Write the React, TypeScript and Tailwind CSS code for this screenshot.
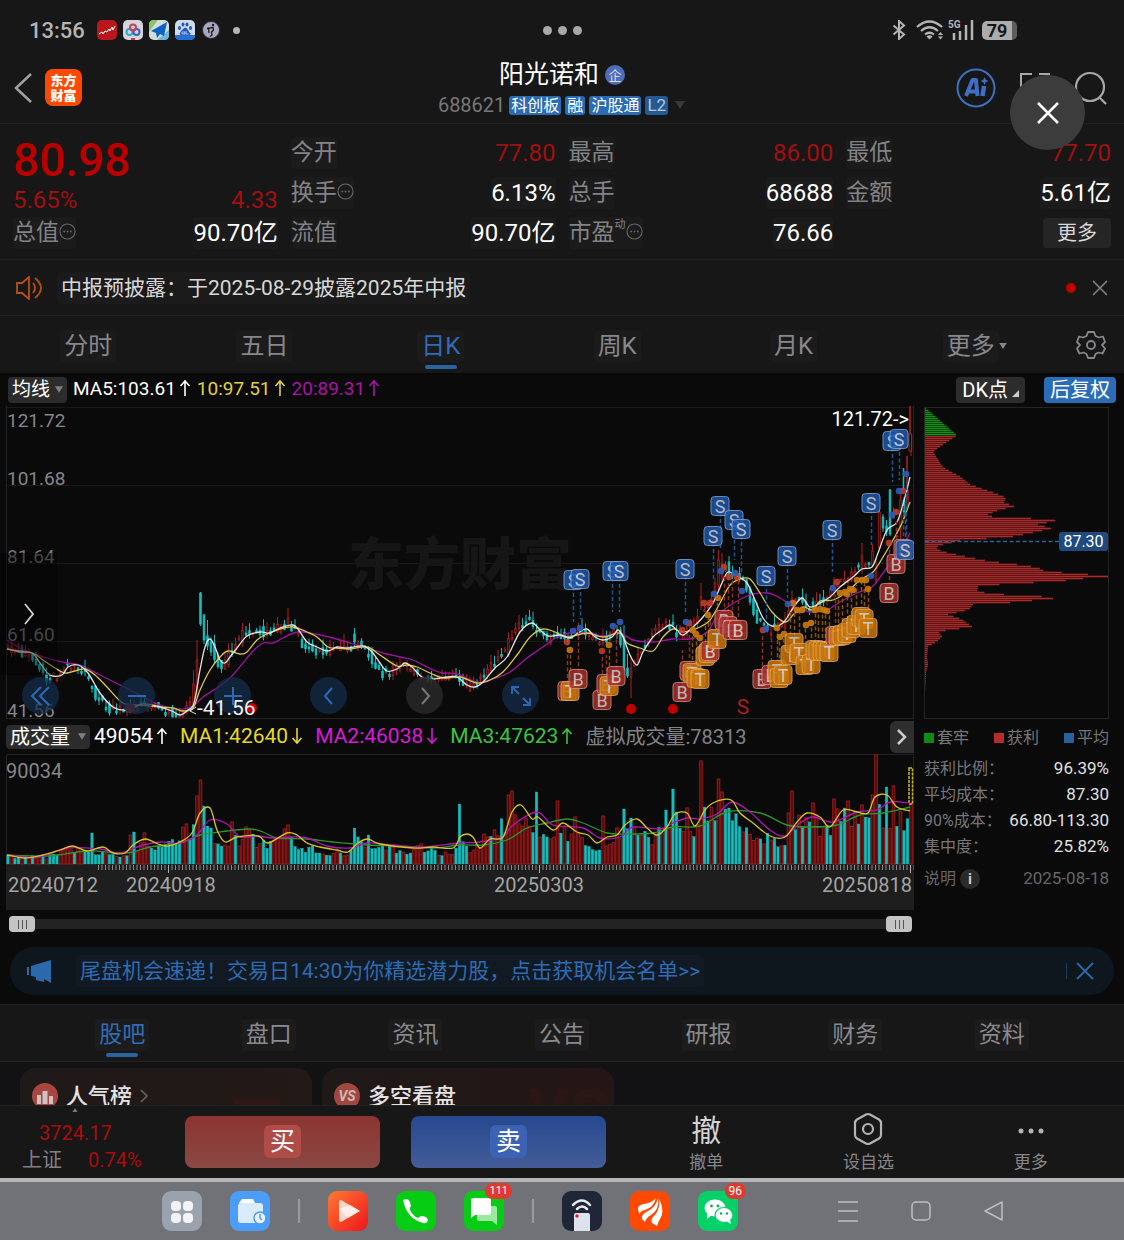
import React from "react";

type Pt = [number, number];

/** Parses "x,y x,y ..." into points. */
const pts = (s: string): Pt[] => s.trim().split(/\s+/).map((p) => p.split(",").map(Number) as Pt);

const at = (line: Pt[], x: number) => {
  if (x <= line[0][0]) return line[0][1];
  for (let i = 1; i < line.length; i++) {
    if (x <= line[i][0]) {
      const [x0, y0] = line[i - 1];
      const [x1, y1] = line[i];
      return y0 + ((y1 - y0) * (x - x0)) / (x1 - x0 || 1);
    }
  }
  return line[line.length - 1][1];
};

const smooth = (p: Pt[]) => {
  let d = `M${p[0][0]} ${p[0][1]}`;
  for (let i = 0; i < p.length - 1; i++) {
    const a = p[i - 1] ?? p[i];
    const b = p[i];
    const c = p[i + 1];
    const e = p[i + 2] ?? c;
    const f = (n: number) => n.toFixed(1);
    d += `C${f(b[0] + (c[0] - a[0]) / 6)} ${f(b[1] + (c[1] - a[1]) / 6)} ${f(c[0] - (e[0] - b[0]) / 6)} ${f(c[1] - (e[1] - b[1]) / 6)} ${c[0]} ${c[1]}`;
  }
  return d;
};

const rand = (i: number, k: number) => {
  const v = Math.sin(i * 12.9898 + k * 78.233) * 43758.5453;
  return v - Math.floor(v);
};

const RED = "#a81e1e";
const CYAN = "#16bcbc";

/* ---------- price chart data (chart units, origin at 6,406) ---------- */

const ma5 = pts(`7,649 20,652 32,653 40,663 50,675 62,675 68,667 78,665 88,673 100,693 113,707 127,710 143,704 160,707 172,711 180,715 188,710 194,703 200,670 205,647 210,639 215,647 220,660 225,663 230,657 237,648 247,636 260,632 270,633 280,628 293,625 300,632 307,642 317,647 328,651 337,647 347,648 363,646 372,652 380,663 387,671 397,669 405,663 412,667 422,677 433,679 447,677 457,677 467,685 475,687 483,682 495,668 507,657 520,632 532,623 540,630 548,636 560,635 570,638 578,633 587,629 595,637 603,640 612,637 618,630 623,637 630,655 637,665 643,652 653,637 662,630 670,625 677,630 683,635 693,627 703,617 713,603 722,583 728,572 737,576 747,583 755,600 763,618 772,626 783,623 793,608 802,598 810,607 820,603 830,597 840,587 853,577 862,569 872,567 878,553 887,530 897,522 905,497 910,477`);
const ma10 = pts(`7,649 32,653 43,660 55,668 65,673 75,671 85,669 95,675 107,687 117,698 125,704 140,705 160,707 173,708 183,711 193,708 200,690 210,670 220,657 228,651 240,654 247,652 257,640 267,634 280,629 293,627 307,632 317,637 328,647 337,648 350,649 367,647 380,655 397,666 407,665 417,667 430,673 443,678 460,677 477,683 490,680 503,672 517,655 530,637 543,629 555,632 567,637 587,633 603,637 620,633 627,643 640,648 653,651 663,637 673,629 683,632 700,627 710,620 720,603 730,585 740,579 750,579 760,593 772,612 785,622 793,615 803,607 813,610 820,601 833,600 847,592 860,580 873,572 883,557 893,540 902,523 910,502`);
const ma20 = pts(`7,640 20,648 33,653 47,658 67,663 80,665 100,675 120,685 140,695 157,704 180,709 193,706 203,697 217,688 230,678 243,663 253,651 263,643 273,643 283,638 297,632 310,633 333,638 353,644 367,648 383,653 400,657 413,660 433,670 443,673 457,674 477,682 493,679 510,672 527,658 543,647 557,637 570,633 590,633 603,636 620,633 633,640 653,642 673,639 690,639 707,632 720,613 747,596 767,593 780,598 793,606 810,612 827,610 840,602 857,593 872,587 883,573 893,560 903,547 910,533`);

const extremes: Record<number, [number, number, number, number, boolean]> = {
  // index: high, body top, body bottom, low, rising
  53: [670, 684, 704, 706, true],
  54: [640, 660, 690, 697, true],
  55: [592, 593, 624, 626, false],
  56: [614, 615, 640, 644, false],
  57: [620, 636, 646, 650, false],
  58: [637, 642, 652, 656, false],
  80: [608, 618, 626, 629, true],
  99: [628, 634, 642, 647, false],
  176: [625, 637, 670, 675, false],
  178: [655, 668, 677, 698, true],
  177: [654, 668, 676, 678, false],
  198: [583, 597, 606, 610, true],
  203: [550, 560, 585, 592, true],
  204: [553, 563, 578, 584, true],
  206: [556, 562, 575, 580, false],
  222: [612, 620, 628, 632, true],
  244: [543, 556, 568, 574, true],
  248: [558, 568, 580, 584, true],
  249: [510, 512, 548, 550, true],
  250: [514, 517, 528, 532, false],
  251: [520, 526, 532, 536, false],
  252: [489, 490, 534, 536, false],
  254: [530, 536, 543, 548, true],
  255: [488, 500, 530, 543, true],
  256: [497, 500, 512, 518, false],
  257: [486, 490, 505, 510, true],
  258: [434, 435, 451, 456, true],
};

const candles = Array.from({ length: 259 }, (_, i) => {
  const x = 8 + i * 3.5;
  const e = extremes[i];
  if (e) return { x, h: e[0], t: e[1], b: e[2], l: e[3], up: e[4] };
  const lead = (k: number) => at(ma5, k + 4) + (at(ma5, k + 4) - at(ma10, k + 4)) * 0.25;
  const open = lead(x - 3.5) + (rand(i, 1) - 0.5) * 10;
  const close = lead(x) + (rand(i, 2) - 0.5) * 10;
  const cap = (v: number) => Math.min(v, 717);
  const t = Math.min(open, close);
  const b = Math.max(open, close, t + 2);
  return { x, t: cap(t), b: cap(b), h: cap(t - rand(i, 3) * 9), l: cap(b + rand(i, 4) * 5), up: close < open };
});

type Mark = ["S" | "B" | "T", number, number, number];
const marks: Mark[] = [
  ["S", 573, 580, 622], ["S", 580, 579, 619], ["S", 612, 571, 612], ["S", 619, 571, 612],
  ["S", 685, 569, 612], ["S", 713, 536, 580], ["S", 720, 506, 548], ["S", 734, 520, 560], ["S", 741, 529, 572],
  ["S", 766, 576, 620], ["S", 787, 556, 598], ["S", 832, 530, 572], ["S", 871, 503, 545],
  ["S", 892, 441, 482], ["S", 899, 439, 480],
  ["B", 567, 691, 645], ["T", 570, 691, 655], ["B", 578, 679, 632],
  ["B", 602, 700, 655], ["B", 606, 684, 655], ["T", 609, 686, 647], ["B", 616, 676, 632],
  ["B", 682, 692, 650], ["B", 689, 671, 635], ["T", 692, 673, 632], ["T", 696, 678, 636], ["T", 700, 679, 640],
  ["T", 705, 656, 622], ["T", 708, 653, 615], ["B", 710, 651, 615], ["T", 717, 639, 602],
  ["B", 724, 620, 575], ["B", 728, 626, 580], ["B", 732, 630, 580], ["B", 738, 630, 580],
  ["B", 762, 679, 632], ["B", 771, 675, 635], ["T", 777, 670, 630], ["T", 779, 678, 636], ["T", 783, 675, 636],
  ["T", 790, 655, 612], ["T", 794, 643, 604], ["T", 799, 653, 612], ["T", 805, 665, 627], ["T", 811, 664, 624],
  ["T", 815, 650, 612], ["T", 818, 651, 612], ["T", 822, 651, 612], ["T", 825, 651, 612], ["T", 829, 652, 612],
  ["B", 835, 636, 595], ["T", 838, 636, 596], ["T", 842, 635, 594], ["T", 847, 633, 592], ["T", 851, 628, 590],
  ["T", 856, 625, 585], ["T", 861, 617, 580], ["T", 864, 619, 582], ["T", 868, 628, 590],
  ["B", 889, 593, 548], ["B", 896, 564, 520], ["B", 903, 549, 505], ["S", 905, 550, 505],
];
const markFill = { S: "#1c56a8", B: "#a82e28", T: "#c87408" };
const markStroke = { S: "#7ea2cf", B: "#d08b86", T: "#dfa55a" };
const dashStroke = { S: "#1f5494", B: "#8c2f20", T: "#8a4f06" };

const blueDots = pts("573,631 580,628 613,626 620,622 686,622 714,594 721,571 735,573 742,591 766,629 788,604 833,588 871,576 892,515 899,491 906,474");
const redDots = pts("567,642 602,651 682,630 689,623 704,603 710,603 724,567 729,577 737,577 763,630 837,582 889,543 896,512 903,491");
const goldDots = pts("570,650 609,645 693,630 696,634 700,638 708,615 718,598 777,628 780,637 784,634 793,603 797,610 802,610 806,625 811,623 815,610 820,609 824,610 827,611 840,593 845,592 847,594 850,589 853,590 857,580 862,580 866,580 868,589");

function Mark({ m }: { m: Mark }) {
  const [k, x, y] = m;
  return (
    <g opacity={0.86}>
      <rect x={x - 9} y={y - 9.5} width="18" height="19" rx="3.5" fill={markFill[k]} stroke={markStroke[k]} />
      <text x={x} y={y + 6.5} textAnchor="middle" fontSize="18" fill="#d8d4d6">{k}</text>
    </g>
  );
}

function PriceChart() {
  return (
    <svg viewBox="6 406 908 313" className="block h-auto w-full" role="img" aria-label="日K线图">
      {[407, 485, 563, 641].map((y) => (
        <path key={y} d={`M6 ${y}.5H914`} stroke="#191919" />
      ))}
      <path d="M6.500 406V718.500H914M913.500 406V719" fill="none" stroke="#232323" />
      <text x="348" y="584" fontSize="56" fontWeight="900" fill="#161616">东方财富</text>
      <g fontSize="19" fill="#85858a">
        <text x="7" y="427">121.72</text>
        <text x="7" y="485">101.68</text>
        <text x="7" y="563" fill="#747474">81.64</text>
        <text x="7" y="641" fill="#747474">61.60</text>
        <text x="7" y="717">41.56</text>
      </g>
      {candles.map((c, i) => (
        <g key={i} stroke={c.up ? RED : CYAN} fill={c.up ? "#0a0a0a" : CYAN}>
          <path d={`M${c.x} ${c.h}V${c.l}`} />
          <rect x={c.x - 0.8} y={c.t} width="1.6" height={Math.max(1, c.b - c.t)} strokeWidth="0.9" />
        </g>
      ))}
      <g stroke={RED} fill="#0a0a0a">
        <path d="M903.500 468V490" stroke={CYAN} strokeWidth="1.600" />
        <path d="M907 456V500M910 406V434" strokeWidth="1.600" />
        <rect x="909" y="434" width="2.500" height="17" />
      </g>
      <g fill="none" strokeWidth="1.300">
        <path d={smooth(ma20)} stroke="#a012a0" />
        <path d={smooth(ma10)} stroke="#d8c94a" />
        <path d={smooth(ma5)} stroke="#e4e4e4" />
      </g>
      {marks.map(([k, x, y, y2], i) => (
        <path key={i} d={`M${x + 0.5} ${y}V${y2}`} stroke={dashStroke[k]} strokeWidth="1.500" strokeDasharray="4 2.500" />
      ))}
      <path d="M906.500 542V482" stroke="#1f5494" strokeWidth="1.500" strokeDasharray="4 2.500" />
      {redDots.map(([x, y], i) => <circle key={i} cx={x} cy={y} r="3.300" fill="#c9402c" opacity="0.85" />)}
      {goldDots.map(([x, y], i) => <circle key={i} cx={x} cy={y} r="3.300" fill="#c97a0a" opacity="0.9" />)}
      {blueDots.map(([x, y], i) => <circle key={i} cx={x} cy={y} r="3.300" fill="#2c5cb8" opacity="0.9" />)}
      {marks.map((m, i) => <Mark key={i} m={m} />)}
      <circle cx="130" cy="708" r="5" fill="#8f1c26" />
      <circle cx="252" cy="708" r="5" fill="#c80000" />
      <circle cx="631" cy="709" r="5" fill="#c00000" />
      <circle cx="673" cy="709" r="5" fill="#c00000" />
      <text x="743" y="714" fontSize="21" textAnchor="middle" fill="#a81e1e">S</text>
      <path d="M196 707L190 711L196 714" fill="none" stroke="#ddd" />
      <text x="909" y="426" fontSize="20" textAnchor="end" fill="#fff">121.72-&gt;</text>
    </svg>
  );
}

/* ---------- volume chart data ---------- */

const volBase = pts(`7,856 47,857 67,845 87,853 100,852 117,857 127,855 140,845 160,848 180,840 197,827 213,838 223,848 233,837 267,843 290,840 300,847 317,848 333,853 347,855 360,845 383,845 400,852 420,845 440,853 453,852 460,837 473,853 483,837 503,823 520,815 532,827 547,835 560,827 577,835 587,844 597,848 607,842 620,830 637,823 652,842 660,830 677,823 693,833 707,810 723,803 737,815 747,830 760,840 773,835 783,843 793,820 810,817 827,830 840,820 860,815 877,808 893,820 910,817`);
const volPeaks: [number, number, boolean][] = [
  [91, 833, false], [130, 835, true], [134, 832, false], [144, 833, true], [182, 827, true], [186, 824, true],
  [196, 796, true], [200, 780, true], [203, 806, false], [207, 826, false], [210, 828, false], [231, 822, true],
  [245, 827, true], [249, 830, true], [252, 834, false], [284, 829, true], [287, 825, true], [354, 828, false],
  [358, 837, false], [368, 835, false], [459, 804, false], [508, 795, true], [511, 791, true], [536, 792, false],
  [557, 801, true], [574, 817, true], [603, 816, true], [623, 809, false], [631, 818, false], [665, 810, false],
  [672, 789, false], [676, 812, false], [687, 808, true], [700, 761, true], [704, 807, false], [718, 779, true],
  [722, 792, true], [725, 809, false], [729, 808, false], [791, 791, true], [787, 813, true], [812, 803, true],
  [833, 799, true], [837, 809, true], [844, 808, false], [847, 801, true], [861, 805, true], [872, 795, true],
  [875, 754, true], [886, 787, false], [893, 786, true], [910, 803, true],
];
const volumes = Array.from({ length: 259 }, (_, i) => {
  const x = 8 + i * 3.5;
  const peak = volPeaks.find((p) => Math.abs(p[0] - x) <= 1.75);
  if (peak) return { x, y: peak[1], up: peak[2] };
  const base = at(volBase, x);
  const up = rand(i, 9) < (at(ma5, x + 6) < at(ma5, x - 6) ? 0.66 : 0.4);
  return { x, y: Math.min(860, base + (rand(i, 7) - 0.35) * (864 - base) * 0.5), up };
});
const volMa1 = pts(`7,855 25,858 43,855 60,850 73,846 87,851 103,847 113,853 125,853 133,845 145,839 158,844 168,846 180,842 192,833 200,813 210,808 217,830 225,842 237,837 258,836 268,843 287,833 297,835 307,843 320,847 337,850 348,852 358,843 368,839 380,844 413,848 433,847 453,848 460,837 467,834 473,837 480,848 490,839 503,837 512,812 521,805 532,819 538,817 553,830 563,823 577,832 588,835 597,843 607,837 617,835 625,825 637,819 647,828 657,835 667,827 675,814 687,813 695,826 705,810 715,802 731,800 740,813 753,823 770,836 785,837 797,822 807,813 820,817 830,827 843,810 857,812 868,813 875,797 887,795 897,807 910,811`);
const volMa2 = pts(`7,855 40,857 67,848 100,849 120,853 140,846 160,842 180,843 197,835 210,820 227,824 240,837 257,836 273,838 290,837 307,838 327,846 350,848 367,843 393,845 420,847 460,843 480,842 503,837 513,825 537,812 553,825 583,828 600,838 620,837 633,827 660,829 673,823 687,818 700,819 717,814 732,802 750,812 770,830 785,836 800,823 813,817 833,822 857,812 877,810 890,802 910,803`);
const volMa3 = pts(`7,855 50,856 87,851 127,853 150,847 180,843 200,835 227,831 250,829 263,832 277,838 307,839 333,842 367,845 400,846 433,848 460,845 483,845 507,840 527,828 547,823 567,819 583,823 607,833 627,834 653,833 673,827 700,826 727,812 760,813 787,825 810,827 837,825 860,815 883,813 910,807`);

function VolumeChart() {
  return (
    <svg viewBox="6 754 908 120" className="block h-auto w-full bg-[linear-gradient(#0a0a0a_92%,#1e1e1e_92%)]" role="img" aria-label="成交量图">
      <path d="M6.500 864V754.500H913.500V864" fill="none" stroke="#232323" />
      <text x="6" y="778" fontSize="20" fill="#85858a">90034</text>
      {volumes.map((v, i) => (
        <rect
          key={i}
          x={v.x - 1.3}
          y={v.y}
          width="2.600"
          height={864 - v.y}
          fill={v.up ? "#480c0c" : CYAN}
          stroke={v.up ? "#981a1a" : CYAN}
          strokeWidth={v.up ? 1 : 0.3}
        />
      ))}
      <rect x="909" y="768" width="3.500" height="36" fill="none" stroke="#c8b820" strokeWidth="1.500" strokeDasharray="3 1" />
      <g fill="none" strokeWidth="1.300">
        <path d={smooth(volMa3)} stroke="#2c962c" />
        <path d={smooth(volMa2)} stroke="#b414b4" />
        <path d={smooth(volMa1)} stroke="#d6c420" />
      </g>
      <path d="M98 867.500H914" stroke="#8a8a8a" strokeWidth="5" strokeDasharray="1 2.500" />
      <path d="M168.500 865V873M539.500 865V873M910.500 865V873" stroke="#aaa" />
    </svg>
  );
}

/* ---------- cost distribution ---------- */

const chips = pts(`28,925 56,957 63,946 72,933 88,943 97,960 105,970 113,993 118,1006 123,1004 127,1014 131,997 135,988 137,992 139,1031 141,1055 145,1038 149,1051 153,1033 157,1013 161,960 165,943 168,935 172,942 177,965 182,990 185,1017 188,1038 192,1045 194,1078 197,1108 199,1083 202,1057 204,1010 207,978 211,977 214,988 216,1020 218,1063 220,1043 223,1010 225,973 230,969 235,948 240,962 247,972 250,953 252,938 257,942 262,937 267,928 277,927 285,928 293,926 313,925`);

function ChipChart() {
  return (
    <svg viewBox="924 406 185 313" className="block h-auto w-full" role="img" aria-label="筹码分布">
      <rect x="924.500" y="407.500" width="184" height="311" fill="none" stroke="#242424" />
      {Array.from({ length: 143 }, (_, i) => {
        const y = 29 + i * 2;
        const d = `M925 ${y + 379.5}H${at(chips, y).toFixed(1)}`;
        return (
          <g key={i}>
            <path d={d} stroke={y < 56 ? "#0c5c10" : "#701a1a"} strokeWidth="2" />
            <path d={d} stroke={y < 56 ? "#119016" : "#a82a2a"} strokeWidth="1" />
          </g>
        );
      })}
      <path d="M925 541.500H1059" stroke="#2a5f9e" strokeWidth="1.500" strokeDasharray="4 2.500" />
      <rect x="1059" y="532" width="49" height="19" rx="3" fill="#1f4a80" />
      <text x="1083.500" y="547" fontSize="16" textAnchor="middle" fill="#fff">87.30</text>
    </svg>
  );
}

/* ---------- small parts ---------- */

const Tri = ({ className }: { className: string }) => (
  <svg viewBox="0 0 10 8" className={className} aria-hidden="true"><path d="M0 0H10L5 8Z" fill="currentColor" /></svg>
);

const Arrow = ({ down }: { down?: boolean }) => (
  <svg viewBox="0 0 12 18" className={down ? "ml-[3px] inline-block h-[18px] w-3 rotate-180 align-[-2px]" : "ml-[3px] inline-block h-[18px] w-3 align-[-2px]"} fill="none" stroke="currentColor" strokeWidth="1.600" role="img" aria-label={down ? "下降" : "上升"}>
    <path d="M6 17V2M1.500 7L6 2L10.500 7" />
  </svg>
);

const More = () => (
  <svg viewBox="0 0 18 18" className="-mt-1 size-[17px] text-[#66666a]" aria-hidden="true">
    <circle cx="9" cy="9" r="8" fill="none" stroke="currentColor" strokeWidth="1.200" />
    <circle cx="5.500" cy="9" r="1" fill="currentColor" /><circle cx="9" cy="9" r="1" fill="currentColor" /><circle cx="12.500" cy="9" r="1" fill="currentColor" />
  </svg>
);

function Row({ label, value, red, info, sup }: { label: string; value: React.ReactNode; red?: boolean; info?: boolean; sup?: string }) {
  return (
    <div className="flex h-10 items-center justify-between">
      <dt className="flex items-center rounded bg-[#1b1b1b] py-0.5 text-[23px] leading-7 text-[#838387]">
        {label}
        {sup && <sup className="-top-2 text-[11px]">{sup}</sup>}
        {info && <More />}
      </dt>
      <dd className={red ? "text-2xl text-[#a01010]" : "rounded bg-[#1b1b1b] text-2xl text-white"}>{value}</dd>
    </div>
  );
}

function StatusBar() {
  return (
    <div className="relative flex h-15 items-center justify-between px-[29px] text-[#b4b4b4]">
      <div className="flex items-center gap-1.5">
        <span className="mr-1.5 text-[22px] font-medium">13:56</span>
        <svg viewBox="0 0 20 20" className="size-5" aria-hidden="true">
          <rect width="20" height="20" rx="5" fill="#b9171c" />
          <path d="M2 14L5 12L6 14L8 11L10 12L12 9L13 11L15 7L16 10L18 6" fill="none" stroke="#fff" />
        </svg>
        <svg viewBox="0 0 20 20" className="size-5" aria-hidden="true">
          <rect width="20" height="20" rx="5" fill="#d4d6da" />
          <g fill="none" strokeWidth="2"><circle cx="6.500" cy="12" r="3" stroke="#2fa9cf" /><circle cx="13.500" cy="12" r="3" stroke="#3c63c0" /><circle cx="10" cy="7.500" r="3" stroke="#cf3c68" /></g>
          <path d="M8 20h4v-2h-4z" fill="#cf3c50" />
        </svg>
        <svg viewBox="0 0 20 20" className="size-5" aria-hidden="true">
          <rect width="20" height="20" rx="5" fill="#d2dde0" /><path d="M5 0H9L0 12V5Q0 0 5 0Z" fill="#8fc46a" /><path d="M20 10V15Q20 20 15 20H8Z" fill="#6cb5dd" />
          <path d="M18 2L2 11L7 13L8 18L11 14L15 16Z" fill="#0f62c4" />
        </svg>
        <svg viewBox="0 0 20 20" className="size-5" aria-hidden="true">
          <rect width="20" height="20" rx="5" fill="#d0dbea" /><path d="M0 15H20Q20 20 15 20H5Q0 20 0 15Z" fill="#2370d8" />
          <g fill="#2255c4"><ellipse cx="4.500" cy="8" rx="1.500" ry="2" /><ellipse cx="8" cy="4.500" rx="1.500" ry="2" /><ellipse cx="12" cy="4.500" rx="1.500" ry="2" /><ellipse cx="15.500" cy="8" rx="1.500" ry="2" /><path d="M10 7.500Q12 7.500 13 10T16 14Q14 16 10 15Q6 16 4.500 14Q5 12 7 10T10 7.500Z" /></g>
          <path d="M7 12H10V14H7ZM11 11V14H13.500" fill="none" stroke="#d0dbea" strokeWidth=".8" />
        </svg>
        <svg viewBox="0 0 20 20" className="size-5" aria-hidden="true">
          <circle cx="10" cy="10" r="8.500" fill="#a9a7bc" stroke="#2d2b45" />
          <circle cx="12" cy="5" r="1.200" fill="#1a1a1a" />
          <path d="M6 8.500L12 7.500L12.500 10L10.500 12L11 15L9 16.500M7.500 9L8 13" fill="none" stroke="#1a1a1a" strokeWidth="1.300" />
        </svg>
        <span className="ml-1.5 size-[7px] rounded-full bg-[#b4b4b4]" />
      </div>
      <div className="absolute inset-x-0 flex justify-center gap-1.5">
        <span className="size-[9px] rounded-full bg-[#a8a8a8]" /><span className="size-[9px] rounded-full bg-[#a8a8a8]" /><span className="size-[9px] rounded-full bg-[#a8a8a8]" />
      </div>
      <div className="mr-[78px] flex items-center gap-2">
        <svg viewBox="0 0 14 20" className="mr-0.5 h-5 w-3.5" fill="none" stroke="currentColor" strokeWidth="2" aria-hidden="true"><path d="M1.500 5.500L12 14.500L7 19V1L12 5.500L1.500 14.500" /></svg>
        <svg viewBox="0 0 28 20" className="h-5 w-7" fill="none" stroke="currentColor" strokeWidth="2.200" aria-hidden="true">
          <path d="M1 7Q13.500 -4 26 7M5 11Q13.500 3.500 22 11M9 14.500Q13.500 11 18 14.500" /><path d="M10.500 16.500Q13.500 14 16.500 16.500L13.500 19.500Z" fill="currentColor" stroke="none" />
          <path d="M22 15L24.500 12L27 15ZM22 16.500L24.500 19.500L27 16.500Z" fill="currentColor" stroke="none" />
        </svg>
        <svg viewBox="0 0 26 22" className="-ml-1 h-[22px] w-[26px]" aria-hidden="true">
          <text x="0" y="9" fontSize="10" fontWeight="700" fill="currentColor">5G</text>
          <path d="M6 14V21M12 12V21M18 6V21M24 1V21" stroke="currentColor" strokeWidth="2.500" />
        </svg>
        <span className="flex items-center">
          <span className="flex h-[19px] w-[30px] items-center justify-center rounded-l-[5px] bg-[#acacac] text-[18px] font-bold text-[#171717]">79</span>
          <span className="h-[19px] w-[5px] rounded-r-[5px] bg-[#5d5d5d]" />
        </span>
      </div>
    </div>
  );
}

const tag = "rounded-[3px] bg-[#2a6cb4] px-0.5 text-[16px] leading-[19px] text-white";

function Header() {
  return (
    <header className="relative flex h-16 items-center justify-between border-b border-[#222] pr-4 pl-[13px]">
      <div className="-mt-2 flex items-center gap-3">
        <button aria-label="返回" className="text-[#a0a0a0]">
          <svg viewBox="0 0 20 32" className="h-8 w-5" fill="none" stroke="currentColor" strokeWidth="2.500"><path d="M18 2L3 16L18 30" /></svg>
        </button>
        <button className="h-[37px] w-[37px] rounded-lg bg-[#ff4800] text-[13px] leading-[15px] font-black text-white">东方<br />财富</button>
      </div>
      <div className="absolute inset-x-0 top-0 mx-auto flex w-fit flex-col items-center">
        <h1 className="flex items-center gap-1.5 text-[25px] leading-[30px] text-white">
          <span>阳光诺和</span>
          <span className="flex size-5 items-center justify-center rounded-full bg-[#4e6cb8] text-[13px] leading-none text-[#dde]">企</span>
        </h1>
        <div className="mt-1 flex items-center gap-1">
          <span className="text-[20px] leading-[22px] text-[#77777a]">688621</span>
          <span className={tag}>科创板</span><span className={tag}>融</span><span className={tag}>沪股通</span><span className="rounded-[3px] bg-[#235a96] px-0.5 text-[17px] leading-[19px] text-[#b9c7d8]">L2</span>
          <Tri className="ml-0.5 h-2 w-3 text-[#3a3a3a]" />
        </div>
      </div>
      <div className="-mt-2 flex items-center gap-[22px]">
        <button aria-label="Ai" className="text-[#3f6fc4]">
          <svg viewBox="0 0 40 40" className="size-10">
            <circle cx="20" cy="20" r="18.500" fill="none" stroke="currentColor" strokeWidth="2" />
            <path d="M10 28L16.500 12H20L21.500 28M13 23.500H20" fill="none" stroke="currentColor" strokeWidth="4" strokeLinejoin="round" />
            <path d="M28 18L26.500 28" stroke="currentColor" strokeWidth="4.500" /><path d="M28.500 9L29.700 11.800L32.500 13L29.700 14.200L28.500 17L27.300 14.200L24.500 13L27.300 11.800Z" fill="currentColor" />
          </svg>
        </button>
        <button aria-label="截屏" className="text-[#a8a8a8]">
          <svg viewBox="0 0 34 34" className="size-[34px]" fill="none" stroke="currentColor" strokeWidth="2"><path d="M3 16V3H14M21 3H32M3 22V32H14M21 32H32V20" /></svg>
        </button>
        <button aria-label="搜索" className="text-[#a8a8a8]">
          <svg viewBox="0 0 34 34" className="size-[34px]" fill="none" stroke="currentColor" strokeWidth="2.200"><circle cx="16" cy="16" r="14" /><path d="M26 27L32 33" /></svg>
        </button>
      </div>
      <button aria-label="关闭" className="absolute top-[15px] right-[39px] flex size-[75px] items-center justify-center rounded-full bg-[#3c3c3c] text-white">
        <svg viewBox="0 0 24 24" className="size-6" stroke="currentColor" strokeWidth="2.500"><path d="M2 2L22 22M22 2L2 22" /></svg>
      </button>
    </header>
  );
}

const roundBtn = "flex size-[37px] items-center justify-center rounded-full bg-[#132c4a]/75 text-[#2f68b0]";
const zoomIcons = [
  { label: "最左", d: "M12 3L3 12L12 21M20 3L11 12L20 21" },
  { label: "缩小", d: "M3 12H21" },
  { label: "放大", d: "M3 12H21M12 3V21" },
  { label: "左移", d: "M15 4L8 12L15 20" },
];

const costs = [
  ["获利比例：", "96.39%"],
  ["平均成本：", "87.30"],
  ["90%成本：", "66.80-113.30"],
  ["集中度：", "25.82%"],
];

const thumb =
  "pointer-events-none absolute inset-x-0 top-0 h-4 w-full appearance-none bg-transparent [&::-webkit-slider-thumb]:pointer-events-auto [&::-webkit-slider-thumb]:h-4 [&::-webkit-slider-thumb]:w-[26px] [&::-webkit-slider-thumb]:appearance-none [&::-webkit-slider-thumb]:rounded [&::-webkit-slider-thumb]:[background:repeating-linear-gradient(90deg,#555_0,#555_1px,transparent_1px,transparent_4px)_center/9px_9px_no-repeat,#c4c4c4]";

function Charts() {
  return (
    <main className="bg-[#0a0a0a]">
      <div className="flex h-[33px] items-center justify-between pr-2 pl-2 text-[19px]">
        <div className="flex items-center gap-1.5">
          <label className="relative flex items-center rounded bg-[#2c2c2c] text-white">
            <select aria-label="主图指标" className="h-[26px] appearance-none bg-transparent pr-4 pl-1 leading-6"><option>均线</option></select>
            <Tri className="pointer-events-none absolute right-1 h-[7px] w-2 text-[#808080]" />
          </label>
          <span className="text-white">MA5:103.61<Arrow /></span>
          <span className="text-[#e0d040]">10:97.51<Arrow /></span>
          <span className="text-[#a814a8]">20:89.31<Arrow /></span>
        </div>
        <div className="flex items-center gap-[19px] text-xl">
          <button className="flex h-[26px] items-center gap-1 rounded bg-[#2c2c2c] px-1.5 text-white">DK点
            <svg viewBox="0 0 7 7" className="mt-2 size-[7px]" aria-hidden="true"><path d="M7 0V7H0Z" fill="#ccc" /></svg>
          </button>
          <button className="h-[26px] rounded bg-[#2a6cb8] px-1.5 leading-6 text-white">后复权</button>
        </div>
      </div>
      <div className="flex gap-2.5 pr-[15px] pl-1.5">
        <section className="min-w-0 flex-1">
          <div className="relative">
            <PriceChart />
            <button aria-label="展开" className="absolute top-[147px] -left-1.5 flex h-[122px] w-[57px] items-center justify-center bg-black/40 text-[#d0d0d0]">
              <svg viewBox="0 0 10 22" className="h-[22px] w-2.5" fill="none" stroke="currentColor" strokeWidth="1.800"><path d="M1 1L9 11L1 21" /></svg>
            </button>
            <div className="absolute bottom-[5px] left-4 flex gap-[59px]">
              {zoomIcons.map((z) => (
                <button key={z.label} aria-label={z.label} className={roundBtn}>
                  <svg viewBox="0 0 24 24" className="size-6" fill="none" stroke="currentColor" strokeWidth="2"><path d={z.d} /></svg>
                </button>
              ))}
              <button aria-label="右移" className="flex size-[37px] items-center justify-center rounded-full bg-[#262626]/90 text-[#777]">
                <svg viewBox="0 0 24 24" className="size-6" fill="none" stroke="currentColor" strokeWidth="2"><path d="M9 4L16 12L9 20" /></svg>
              </button>
              <button aria-label="全屏" className={roundBtn}>
                <svg viewBox="0 0 24 24" className="size-6" fill="none" stroke="currentColor" strokeWidth="1.800"><path d="M3 10V3H10M3 3L10 10M21 14V21H14M21 21L14 14" /></svg>
              </button>
            </div>
            <span className="absolute bottom-0 left-[191px] text-[21px] leading-[22px] text-[#f2f2f2]">-41.56</span>
          </div>
          <div className="flex h-[35px] items-center text-[21px]">
            <label className="relative flex items-center rounded bg-[#2c2c2c] text-xl text-white">
              <select aria-label="副图指标" className="h-6 appearance-none bg-transparent pr-5 pl-1 leading-6"><option>成交量</option></select>
              <Tri className="pointer-events-none absolute right-1 h-[7px] w-2 text-[#808080]" />
            </label>
            <span className="ml-1 text-white">49054<Arrow /></span>
            <span className="ml-3 text-[#e4d82a]">MA1:42640<Arrow down /></span>
            <span className="ml-3 text-[#d81ad8]">MA2:46038<Arrow down /></span>
            <span className="ml-3 text-[#3cc43c]">MA3:47623<Arrow /></span>
            <span className="ml-3 text-xl text-[#828286]">虚拟成交量:78313</span>
            <button aria-label="下一个指标" className="ml-auto flex h-8 w-6 items-center justify-center rounded-l-md bg-[#2e2e2e] text-[#ccc]">
              <svg viewBox="0 0 10 16" className="h-4 w-2.5" fill="none" stroke="currentColor" strokeWidth="2.500"><path d="M1 1L8 8L1 15" /></svg>
            </button>
          </div>
          <VolumeChart />
          <div className="flex h-9 justify-between bg-[#1e1e1e] px-0.5 text-xl leading-[22px] text-[#a4a4a4]">
            <div className="flex gap-7"><time>20240712</time><time>20240918</time></div>
            <time className="ml-10">20250303</time>
            <time>20250818</time>
          </div>
          <div className="relative mt-1.5 mr-0.5 ml-[3px] h-4">
            <div className="absolute inset-x-0 top-[3px] h-2.5 rounded-full bg-[#232325]" />
            <input type="range" aria-label="起始日期" defaultValue={0} className={thumb} />
            <input type="range" aria-label="结束日期" defaultValue={100} className={thumb} />
          </div>
        </section>
        <aside className="w-[185px] shrink-0 text-base text-[#77777b]">
          <ChipChart />
          <ul className="flex h-[37px] items-center justify-between">
            <li className="flex items-center gap-[3px]"><span className="size-2.5 bg-[#108a14]" />套牢</li>
            <li className="flex items-center gap-[3px]"><span className="size-2.5 bg-[#b62c2c]" />获利</li>
            <li className="flex items-center gap-[3px]"><span className="size-2.5 bg-[#2560a0]" />平均</li>
          </ul>
          <dl>
            {costs.map(([k, v]) => (
              <div key={k} className="flex h-[26px] items-center justify-between whitespace-nowrap">
                <dt className="-mr-4">{k}</dt><dd className="text-[17px] text-[#e0e0e0]">{v}</dd>
              </div>
            ))}
          </dl>
          <div className="flex h-[38px] items-center justify-between text-[#66666a]">
            <button className="flex items-center gap-1">说明<span className="flex size-5 items-center justify-center rounded-full bg-[#2a2a2a] text-[15px] font-bold text-[#ccc]">i</span></button>
            <time className="text-[17px]">2025-08-18</time>
          </div>
        </aside>
      </div>
      <div className="px-2.5 pt-[15px] pb-[9px]">
        <div className="flex h-12 items-center rounded-full bg-[#0e161e] pr-5 pl-4 text-[#2c68ac]">
          <svg viewBox="0 0 26 26" className="size-[26px]" fill="currentColor" aria-hidden="true"><path d="M1 9H3V17H1ZM5 8L25 2V25L18 21V24L10 22V19L5 18Z" /></svg>
          <a href="#picks" className="ml-6 rounded bg-[#111a22] px-1 text-[21px] leading-8 text-[#2c6cb4]">尾盘机会速递！交易日14:30为你精选潜力股，点击获取机会名单&gt;&gt;</a>
          <span className="ml-auto h-4 w-px bg-[#1c3a5c]" />
          <button aria-label="关闭提示" className="ml-[9px]"><svg viewBox="0 0 18 18" className="size-[18px]" stroke="currentColor" strokeWidth="1.800"><path d="M1 1L17 17M17 1L1 17" /></svg></button>
        </div>
      </div>
    </main>
  );
}

const app = "relative size-10 shrink-0";

function Dock() {
  return (
    <nav aria-label="应用栏" className="flex h-[62px] items-center gap-7 border-t-4 border-[#b6b6b8] bg-[#717277] pr-[118px] pl-[162px]">
      <button aria-label="全部应用" className={app}>
        <svg viewBox="0 0 40 40"><rect width="40" height="40" rx="9" fill="#9aa2ae" /><g fill="#f1f3f6"><rect x="9" y="10" width="10" height="10" rx="4" /><rect x="21" y="10" width="10" height="10" rx="4" /><rect x="9" y="22" width="10" height="10" rx="4" /><rect x="21" y="22" width="10" height="10" rx="4" /></g></svg>
      </button>
      <button aria-label="文件管理" className={app}>
        <svg viewBox="0 0 40 40"><rect width="40" height="40" rx="9" fill="#4c9dfa" /><path d="M12 8H23L25 12H9Z" fill="#fff" /><rect x="8" y="12" width="25" height="20" rx="3" fill="#d9ebff" /><circle cx="30" cy="27" r="6" fill="#e8f3ff" stroke="#4c9dfa" strokeWidth="1.500" /><path d="M30 23V27L32 29" fill="none" stroke="#4c9dfa" strokeWidth="1.500" /></svg>
      </button>
      <span className="h-6 w-0.5 bg-[#9a9a9e]" />
      <button aria-label="视频" className={app}>
        <svg viewBox="0 0 40 40"><defs><linearGradient id="vid" x1="0" y1="0" x2="1" y2="1"><stop stopColor="#ff7a32" /><stop offset="1" stopColor="#f0141c" /></linearGradient></defs><rect width="40" height="40" rx="9" fill="url(#vid)" /><path d="M13 9L32 20L13 31Q11 31 11 29V11Q11 9 13 9Z" fill="#ffd5c8" /><path d="M11 18L22 14L32 20L20 27Z" fill="#fff" opacity=".6" /></svg>
      </button>
      <button aria-label="电话" className={app}>
        <svg viewBox="0 0 40 40"><rect width="40" height="40" rx="9" fill="#06cc14" /><path d="M7 9Q12 6 14 11L15 15Q13 17 14 19Q17 25 22 27L25 25Q31 25 32 29Q31 33 27 32Q11 28 7 9Z" fill="#fff" /></svg>
      </button>
      <button aria-label="短信 111" className={app}>
        <svg viewBox="0 0 40 40"><rect width="40" height="40" rx="9" fill="#06cc14" /><path d="M15 15H31Q33 15 33 17V34L28 30H15Q13 30 13 28V17Q13 15 15 15Z" fill="#9be8a0" /><path d="M9 7H25Q27 7 27 9V22Q27 24 25 24H11L7 27V9Q7 7 9 7Z" fill="#fff" /></svg>
        <span className="absolute -top-2 -right-2 flex h-4 items-center rounded-full bg-[#e03a30] px-1 text-[11px] text-white">111</span>
      </button>
      <span className="h-6 w-0.5 bg-[#9a9a9e]" />
      <button aria-label="遥控器" className={app}>
        <svg viewBox="0 0 40 40"><rect width="40" height="40" rx="9" fill="#1e2638" /><path d="M11 14Q20 5 28 14M15 18Q20 13 25 18" fill="none" stroke="#e6ecf4" strokeWidth="2.500" strokeLinecap="round" /><path d="M12 24Q12 22 14 22H26Q28 22 28 24V40H12Z" fill="#dde3ee" /><circle cx="15" cy="25" r="1.700" fill="#e02030" /></svg>
      </button>
      <button aria-label="东方财富" className={app}>
        <svg viewBox="0 0 40 40"><rect width="40" height="40" rx="9" fill="#ff4800" /><g fill="#fff"><path d="M8 19Q7 14 14 13Q22 12 26 7Q24 16 15 19Q9 20 10 24Z" /><path d="M12 28Q11 23 18 20Q26 16 28 7Q30 18 21 24Q16 27 15 31Z" /><path d="M22 32Q20 28 25 24Q30 18 29.500 8Q35 21 30 28Q28 31 27 35Z" /></g></svg>
      </button>
      <button aria-label="微信 96" className={app}>
        <svg viewBox="0 0 40 40"><rect width="40" height="40" rx="9" fill="#06d068" /><ellipse cx="17" cy="17" rx="10.500" ry="8.500" fill="#fff" /><path d="M9 22L9 28L14 24Z" fill="#fff" /><ellipse cx="26" cy="24" rx="9" ry="7.500" fill="#fff" stroke="#06d068" strokeWidth="1.200" /><path d="M28 30L33 33L32 28Z" fill="#fff" /><g fill="#06b058"><circle cx="13.500" cy="15" r="1.400" /><circle cx="20" cy="15" r="1.400" /><circle cx="23" cy="22.500" r="1.200" /><circle cx="29" cy="22.500" r="1.200" /></g></svg>
        <span className="absolute -top-2 -right-2 flex h-4 items-center rounded-full bg-[#e03a30] px-1 text-[12px] text-white">96</span>
      </button>
      <div className="ml-auto flex gap-[49px] text-[#bdbec2]">
        <button aria-label="最近任务"><svg viewBox="0 0 24 24" className="size-6" stroke="currentColor" strokeWidth="1.500"><path d="M2 3H22M2 12H22M2 22H22" /></svg></button>
        <button aria-label="主页"><svg viewBox="0 0 24 24" className="size-6" fill="none" stroke="currentColor" strokeWidth="1.500"><rect x="3" y="3" width="18" height="18" rx="4" /></svg></button>
        <button aria-label="后退"><svg viewBox="0 0 24 24" className="size-6" fill="none" stroke="currentColor" strokeWidth="1.500" strokeLinejoin="round"><path d="M20 3V21L3 12Z" /></svg></button>
      </div>
    </nav>
  );
}

export default function App() {
  return (
    <div className="min-h-screen overflow-hidden bg-[#171717] font-[Roboto,'Noto_Sans_CJK_SC',sans-serif]">
      <StatusBar />
      <Header />

      <dl className="grid grid-cols-4 gap-x-[13px] border-b border-[#1f1f1f] px-[13px] pt-[9px] pb-1.5">
        <div>
          <div className="flex h-[54px] items-center text-[46px] leading-none font-medium text-[#b80000]">80.98</div>
          <div className="flex h-[26px] items-center justify-between text-2xl text-[#a01010]"><span>5.65%</span><span>4.33</span></div>
          <Row label="总值" info value="90.70亿" />
        </div>
        <div>
          <Row label="今开" red value="77.80" />
          <Row label="换手" info value="6.13%" />
          <Row label="流值" value="90.70亿" />
        </div>
        <div>
          <Row label="最高" red value="86.00" />
          <Row label="总手" value="68688" />
          <Row label="市盈" sup="动" info value="76.66" />
        </div>
        <div>
          <Row label="最低" red value="77.70" />
          <Row label="金额" value="5.61亿" />
          <div className="flex h-10 items-center justify-end">
            <button className="h-[30px] rounded bg-[#252525] px-3.5 text-[20px] leading-[26px] text-[#d8d8d8]">更多</button>
          </div>
        </div>
      </dl>

      <div className="flex h-14 items-center border-b border-[#222] px-4">
        <svg viewBox="0 0 28 24" className="h-6 w-7 text-[#b8500e]" fill="none" stroke="currentColor" strokeWidth="1.800" aria-hidden="true"><path d="M1 7H6L13 1V23L6 17H1ZM17 7Q21 12 17 17M19 2Q31 12 19 22" /></svg>
        <a href="#notice" className="ml-[13px] rounded bg-[#1b1b1b] px-1 text-[21px] leading-8 text-[#d8d8d8]">中报预披露：于2025-08-29披露2025年中报</a>
        <span className="ml-auto size-2.5 rounded-full bg-[#c00000]" />
        <button aria-label="关闭公告" className="ml-4 text-[#858585]"><svg viewBox="0 0 16 16" className="size-4" stroke="currentColor" strokeWidth="1.500"><path d="M1 1L15 15M15 1L1 15" /></svg></button>
      </div>

      <nav aria-label="周期" className="flex h-[57px] items-center text-2xl text-[#88888c]">
        <div className="grid flex-1 grid-cols-6">
          {["分时", "五日", "日K", "周K", "月K", "更多"].map((t, i) => (
            <button key={t} className={i === 2 ? "relative flex h-14 items-center justify-center pt-0.5 text-[#2f6db8]" : "flex h-14 items-center justify-center gap-1 pt-0.5"}>
              <span className={i === 5 ? "ml-2.5 rounded bg-[#1b1b1b] px-1 leading-8" : "rounded bg-[#1b1b1b] px-1 leading-8"}>{t}</span>
              {i === 2 && <span className="absolute bottom-1 h-1 w-8 rounded-full bg-[#2a62a4]" />}
              {i === 5 && <Tri className="-ml-1 h-1.5 w-2" />}
            </button>
          ))}
        </div>
        <button aria-label="设置" className="flex w-[66px] justify-center">
          <svg viewBox="0 0 30 30" className="size-[30px]" fill="none" stroke="currentColor" strokeWidth="1.800" strokeLinejoin="round"><path d="M12 2H18L19.500 6L23 7.500L27 6.500L29 12L26 15L29 18.500L26.500 23.500L22.500 22.500L19.500 24L18 28H12L10.500 24L7.500 22.500L3.500 23.500L1 18.500L4 15L1 12L3 6.500L7 7.500L10.500 6Z" /><circle cx="15" cy="15" r="4" /></svg>
        </button>
      </nav>

      <Charts />

      <nav aria-label="资讯栏目" className="grid h-[58px] grid-cols-7 border-y border-[#222] px-[49px] text-[23px] text-[#8a8a8e]">
        {["股吧", "盘口", "资讯", "公告", "研报", "财务", "资料"].map((t, i) => (
          <button key={t} className={i === 0 ? "relative flex items-center justify-center pt-1 text-[#2f6db8]" : "flex items-center justify-center pt-1"}>
            <span className="rounded bg-[#1c1c1c] px-1 leading-8">{t}</span>
            {i === 0 && <span className="absolute bottom-1 h-1 w-8 rounded-full bg-[#2a62a4]" />}
          </button>
        ))}
      </nav>

      <div className="flex h-[43px] gap-2.5 overflow-hidden bg-[#121214] px-5 pt-1.5">
        <a href="#rank" className="flex h-14 w-[292px] items-center gap-2 rounded-2xl bg-linear-to-r from-[#1f1919] to-[#231916] pl-3 text-[22px] font-medium text-[#e4e4e4]">
          <svg viewBox="0 0 26 26" className="size-[26px]" aria-hidden="true"><circle cx="13" cy="13" r="13" fill="#a84640" /><path d="M5 12H9V21H5ZM10.500 8H15.500V21H10.500ZM17 13H21V21H17Z" fill="#cfc2c0" /></svg>
          人气榜
          <svg viewBox="0 0 8 14" className="h-3.5 w-2" fill="none" stroke="#666" strokeWidth="1.500" aria-hidden="true"><path d="M1 1L7 7L1 13" /></svg>
          <svg viewBox="0 0 46 8" className="mt-3 ml-[78px] h-2 w-[46px]" aria-hidden="true"><path d="M0 0H46V8H0Z" fill="#2e1714" /></svg>
        </a>
        <a href="#poll" className="flex h-14 w-[292px] items-center gap-2 rounded-2xl bg-linear-to-r from-[#1f1919] to-[#241614] pl-3 text-[22px] font-medium text-[#e4e4e4]">
          <span className="flex size-[26px] items-center justify-center rounded-full bg-[#a04840] text-sm font-bold text-[#d0b8b4] italic">VS</span>
          多空看盘
          <span className="ml-auto pt-9 pr-1 text-[64px] leading-none font-black text-[#2a1715]" aria-hidden="true">VS</span>
        </a>
      </div>

      <footer className="flex h-[73px] items-center border-t border-[#222]">
        <div className="relative w-[185px] pt-2.5 pl-[22px] text-xl leading-[27px] text-[#a80c0c]">
          <Tri className="absolute -top-0.5 left-[69px] h-1 w-3 rotate-180 text-[#777]" />
          <div className="pl-[17px]">3724.17</div>
          <div className="flex gap-[26px]"><span className="text-[#808084]">上证</span><span>0.74%</span></div>
        </div>
        <button className="h-[52px] w-[195px] rounded-lg bg-linear-to-b from-[#8c3430] to-[#8a4844] text-[25px] text-white"><span className="rounded-md bg-[#b04c48] px-1.5 py-0.5">买</span></button>
        <button className="ml-[31px] h-[52px] w-[195px] rounded-lg bg-linear-to-b from-[#264890] to-[#445c98] text-[25px] text-white"><span className="rounded-md bg-[#3c62b4] px-1.5 py-0.5">卖</span></button>
        <div className="ml-[19px] grid flex-1 grid-cols-3 pt-1 pr-3 text-[17px] text-[#86868a]">
          <button className="flex flex-col items-center"><span className="flex h-9 items-center text-[30px] text-[#d4d4d4]">撤</span><span className="leading-7">撤单</span></button>
          <button className="flex flex-col items-center">
            <svg viewBox="0 0 30 34" className="mb-0.5 h-[34px] w-[30px]" fill="none" stroke="#b4b4b4" strokeWidth="2.200" strokeLinejoin="round" aria-hidden="true"><path d="M13 2.500Q15 1.500 17 2.500L26 7.500Q28 9 28 11V23Q28 25 26 26.500L17 31.500Q15 32.500 13 31.500L4 26.500Q2 25 2 23V11Q2 9 4 7.500Z" /><circle cx="15" cy="17" r="5" /></svg>
            <span className="leading-7">设自选</span>
          </button>
          <button className="flex flex-col items-center">
            <svg viewBox="0 0 26 36" className="h-9 w-[26px]" fill="#b4b4b4" aria-hidden="true"><circle cx="3" cy="19" r="2.500" /><circle cx="13" cy="19" r="2.500" /><circle cx="23" cy="19" r="2.500" /></svg>
            <span className="leading-7">更多</span>
          </button>
        </div>
      </footer>
      <Dock />
    </div>
  );
}
